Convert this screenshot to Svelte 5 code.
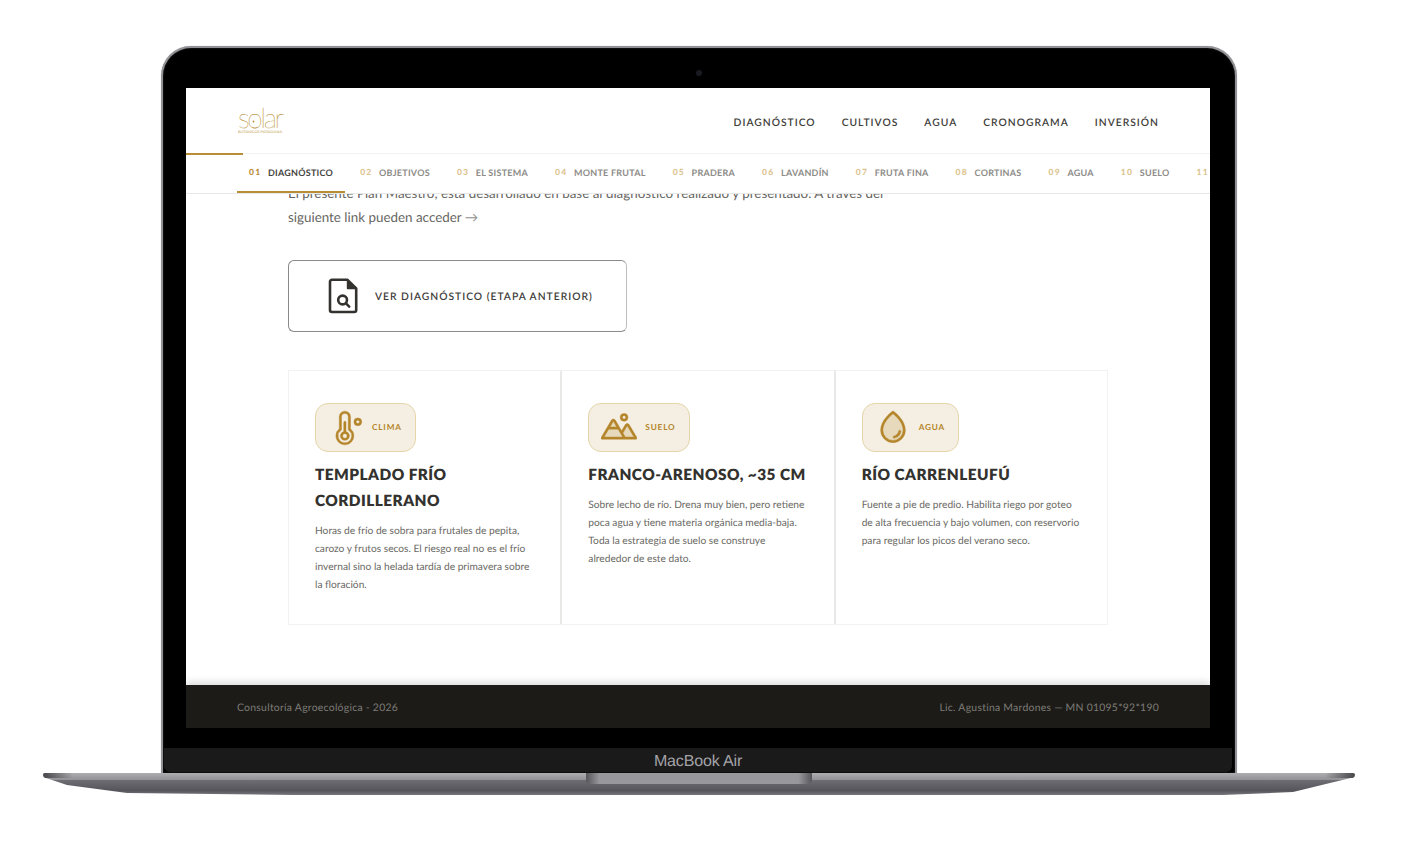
<script>
  const navLinks = ['DIAGNÓSTICO', 'CULTIVOS', 'AGUA', 'CRONOGRAMA', 'INVERSIÓN'];
  const tabs = [
    ['01', 'DIAGNÓSTICO'], ['02', 'OBJETIVOS'], ['03', 'EL SISTEMA'], ['04', 'MONTE FRUTAL'],
    ['05', 'PRADERA'], ['06', 'LAVANDÍN'], ['07', 'FRUTA FINA'], ['08', 'CORTINAS'],
    ['09', 'AGUA'], ['10', 'SUELO'], ['11', '']
  ];
  const cards = [
    { tag: 'CLIMA', icon: 'thermo', title: 'TEMPLADO FRÍO CORDILLERANO', text: 'Horas de frío de sobra para frutales de pepita, carozo y frutos secos. El riesgo real no es el frío invernal sino la helada tardía de primavera sobre la floración.' },
    { tag: 'SUELO', icon: 'mount', title: 'FRANCO-ARENOSO, ~35 CM', text: 'Sobre lecho de río. Drena muy bien, pero retiene poca agua y tiene materia orgánica media-baja. Toda la estrategia de suelo se construye alrededor de este dato.' },
    { tag: 'AGUA', icon: 'drop', title: 'RÍO CARRENLEUFÚ', text: 'Fuente a pie de predio. Habilita riego por goteo de alta frecuencia y bajo volumen, con reservorio para regular los picos del verano seco.' }
  ];
</script>

<div class="stage">
  <div class="lid">
    <div class="bezel-top"><span class="camera"></span></div>
    <div class="screen">
      <header class="head">
        <svg class="logo" viewBox="0 0 50 30" width="50" height="30" aria-label="solar">
          <text x="0" y="22" class="logo-word">solar</text>
          <circle cx="15.5" cy="15.5" r="0.9" fill="#b98d33" />
          <text x="0" y="27.4" class="logo-sub" textLength="44" lengthAdjust="spacingAndGlyphs">BOTÁNICOS PATAGONIA</text>
        </svg>
        <nav class="mainnav">
          {#each navLinks as l}<span>{l}</span>{/each}
        </nav>
      </header>
      <div class="subnav">
        <span class="progress"></span>
        {#each tabs as t, i}
          <div class="tab" class:active={i === 0}><b>{t[0]}</b>{#if t[1]}<span>{t[1]}</span>{/if}</div>
        {/each}
      </div>
      <main class="content">
        <p class="intro">El presente Plan Maestro, está desarrollado en base al diagnóstico realizado y presentado. A través del siguiente link pueden acceder <span class="arrow">→</span></p>
        <div class="linkbtn">
          <svg viewBox="0 0 30 36" width="30" height="36" fill="none" stroke="#33322e" stroke-width="2.6" stroke-linejoin="round" stroke-linecap="round">
            <path d="M4 1.8H19.5L28.2 10.5V32a2 2 0 0 1-2 2H4a2 2 0 0 1-2-2V3.8a2 2 0 0 1 2-2Z" />
            <path d="M19.5 2.5V10.5H27.5Z" fill="#33322e" stroke-width="1.4" />
            <circle cx="14.6" cy="22" r="4.4" />
            <path d="M18 25.4L21.2 28.6" />
          </svg>
          <span>VER DIAGNÓSTICO (ETAPA ANTERIOR)</span>
        </div>
        <section class="cards">
          {#each cards as c}
            <article class="card">
              <div class="badge">
                <svg class="ic" viewBox="0 0 256 256" width="36" height="36" fill="#b4852a" stroke="#b4852a" stroke-width="3">
                  {#if c.icon === 'thermo'}
                    <path d="M212,56a28,28,0,1,0,28,28A28,28,0,0,0,212,56Zm0,40a12,12,0,1,1,12-12A12,12,0,0,1,212,96Zm-84,57V88a8,8,0,0,0-16,0v65a32,32,0,1,0,16,0Zm-8,47a16,16,0,1,1,16-16A16,16,0,0,1,120,200Zm40-66V48a40,40,0,0,0-80,0v86a64,64,0,1,0,80,0Zm-40,98a48,48,0,0,1-27.42-87.4A8,8,0,0,0,96,138V48a24,24,0,0,1,48,0v90a8,8,0,0,0,3.42,6.56A48,48,0,0,1,120,232Z" />
                  {:else if c.icon === 'mount'}
                    <path opacity="0.2" stroke="none" d="M88 64L8 200H248L186 96L147 163Z" />
                    <path d="M164,80a28,28,0,1,0-28-28A28,28,0,0,0,164,80Zm0-40a12,12,0,1,1-12,12A12,12,0,0,1,164,40Zm90.88,155.92-54.56-92.08A15.87,15.87,0,0,0,186.55,96h0a15.85,15.85,0,0,0-13.76,7.84L146.63,148l-44.84-76.1a16,16,0,0,0-27.58,0L1.11,195.94A8,8,0,0,0,8,208H248a8,8,0,0,0,6.88-12.08ZM88,80l23.57,40H64.43ZM22,192l33-56h66l18.74,31.8,0,0L154,192Zm150.57,0-16.66-28.28L186.55,112,234,192Z" />
                  {:else}
                    <path opacity="0.2" stroke="none" d="M208,144a80,80,0,0,1-160,0c0-72,80-128,80-128S208,72,208,144Z" />
                    <path d="M174,47.75a254.19,254.19,0,0,0-41.45-38.3,8,8,0,0,0-9.18,0A254.19,254.19,0,0,0,82,47.75C54.51,79.32,40,112.6,40,144a88,88,0,0,0,176,0C216,112.6,201.49,79.32,174,47.75ZM128,216a72.08,72.08,0,0,1-72-72c0-57.23,55.47-105,72-118,16.53,13,72,60.75,72,118A72.08,72.08,0,0,1,128,216Zm55.89-62.66a57.6,57.6,0,0,1-46.56,46.55A8.75,8.75,0,0,1,136,200a8,8,0,0,1-1.32-15.89c16.57-2.79,30.63-16.85,33.44-33.45a8,8,0,0,1,15.78,2.68Z" />
                  {/if}
                </svg>
                <span>{c.tag}</span>
              </div>
              <h3>{c.title}</h3>
              <p>{c.text}</p>
            </article>
          {/each}
        </section>
      </main>
      <footer class="foot">
        <span>Consultoría Agroecológica - 2026</span>
        <span>Lic. Agustina Mardones — MN 01095*92*190</span>
      </footer>
    </div>
    <div class="bezel-bottom"></div>
    <div class="hinge">MacBook Air</div>
  </div>
  <div class="base">
    <svg class="base-shape" viewBox="0 0 1312 23" width="1312" height="23">
      <defs>
        <linearGradient id="bg" x1="0" y1="0" x2="0" y2="1">
          <stop offset="0" stop-color="#aeaeb2" />
          <stop offset="0.3" stop-color="#929297" />
          <stop offset="0.34" stop-color="#6c6c72" />
          <stop offset="0.8" stop-color="#55555b" />
          <stop offset="1" stop-color="#77777c" />
        </linearGradient>
        <linearGradient id="tip" x1="0" y1="0" x2="1" y2="0">
          <stop offset="0" stop-color="#3c3c40" stop-opacity="0.9" />
          <stop offset="1" stop-color="#3c3c40" stop-opacity="0" />
        </linearGradient>
        <linearGradient id="tipr" x1="1" y1="0" x2="0" y2="0">
          <stop offset="0" stop-color="#3c3c40" stop-opacity="0.9" />
          <stop offset="1" stop-color="#3c3c40" stop-opacity="0" />
        </linearGradient>
        <linearGradient id="nt" x1="0" y1="0" x2="1" y2="0">
          <stop offset="0" stop-color="#55555a" />
          <stop offset="0.06" stop-color="#98989c" />
          <stop offset="0.94" stop-color="#98989c" />
          <stop offset="1" stop-color="#55555a" />
        </linearGradient>
      </defs>
      <path d="M2 0H1310Q1312 0 1312 2.5V4L1287 10L1250 19L1180 22H250L84 20L24 12L0 4V2Q0 0 2 0Z" fill="url(#bg)" />
      <path d="M0 2Q0 0 2 0H30V5H2Z" fill="url(#tip)" />
      <path d="M1312 2Q1312 0 1310 0H1282V5H1310Z" fill="url(#tipr)" />
      <path d="M543 0H769V7Q769 11 763 11H549Q543 11 543 7Z" fill="url(#nt)" />
    </svg>
  </div>
</div>

<style>
  :global(body) { margin: 0; background: #fff; }
  .stage { width: 1411px; height: 856px; box-sizing: border-box; padding: 46px 56px 0 43px; overflow: hidden; display: flex; flex-direction: column; align-items: center; background: #fff; font-family: Lato, "Open Sans", sans-serif; text-rendering: geometricPrecision; }
  .lid { width: 1076px; height: 727px; box-sizing: border-box; flex: none; background: #000; border-radius: 30px 30px 0 0; border: 2px solid #929296; border-bottom: none; padding: 0 25px 0 23px; display: flex; flex-direction: column; box-shadow: inset 0 0 2px #333, 0 0 1px rgba(140,140,145,.7); }
  .bezel-top { height: 40px; flex: none; display: flex; justify-content: center; align-items: flex-start; padding-top: 22px; box-sizing: border-box; }
  .camera { width: 6px; height: 6px; border-radius: 50%; background: #191b20; margin-left: 2px; }
  .screen { width: 1024px; height: 640px; flex: none; background: #fff; display: flex; flex-direction: column; overflow: hidden; position: relative; }

  .head { height: 65px; flex: none; display: flex; align-items: center; justify-content: space-between; padding: 0 51px 0 52px; box-sizing: border-box; background: #fff; }
  .logo-word { font-family: Lato, sans-serif; font-weight: 100; font-size: 28px; letter-spacing: -2.4px; fill: #b98d33; stroke: #b98d33; stroke-width: 0.15; }
  .logo-sub { font-family: Lato, sans-serif; font-weight: 400; font-size: 3.4px; fill: #c09a4a; }
  .mainnav { display: flex; gap: 26px; font-size: 10.3px; font-weight: 600; letter-spacing: 1px; color: #3e3d39; margin-top: 5px; }

  .subnav { height: 41px; flex: none; display: flex; align-items: stretch; gap: 3px; padding-left: 51px; box-sizing: border-box; box-shadow: inset 0 1px 0 #f2f2f2; border-bottom: 1px solid #e8e8e8; background: #fff; position: relative; z-index: 2; white-space: nowrap; overflow: hidden; }
  .progress { position: absolute; left: 0; top: 0; width: 57px; height: 1.5px; background: #b98d33; }
  .tab { flex: none; display: flex; align-items: center; gap: 6.5px; padding: 0 12px 2px; box-sizing: border-box; font-size: 9px; font-weight: 700; color: #8d8c88; letter-spacing: 0.25px; position: relative; height: 40px; }
  .tab b { color: #dcc48f; font-weight: 900; letter-spacing: 1.3px; font-size: 8.5px; }
  .tab.active { color: #45443f; }
  .tab.active b { color: #b98d33; }
  .tab.active::after { content: ""; position: absolute; left: 0; right: 0; bottom: 0; height: 2px; background: #b98d33; }

  .content { flex: 1; min-height: 0; overflow: hidden; padding: 0 102px; box-sizing: border-box; }
  .intro { margin: -13px 0 0; width: 612px; font-size: 13.4px; line-height: 24px; color: #66655f; }
  .arrow { color: #8f8f8b; }
  .linkbtn { margin-top: 31px; width: 339px; height: 72px; box-sizing: border-box; border: 1px solid #8a8a8a; border-right-color: #bdbdbd; border-radius: 6px; display: flex; align-items: center; gap: 17px; padding-left: 39px; font-size: 10.3px; font-weight: 600; letter-spacing: 1px; color: #3e3d39; }
  .linkbtn span { padding-top: 2px; }
  .cards { margin-top: 38px; display: grid; grid-template-columns: repeat(3, 1fr); gap: 2px; width: 820px; height: 255px; box-sizing: border-box; border: 1px solid #f2f2f0; background: #e9e9e7; }
  .card { padding: 32px 26px 0 26px; box-sizing: border-box; background: #fff; min-width: 0; }
  .badge { width: fit-content; height: 49px; box-sizing: border-box; background: #f4efe2; border: 1px solid #e6d5a8; border-radius: 13px; display: flex; align-items: center; gap: 8px; padding: 0 13px 0 12px; font-size: 8.2px; font-weight: 700; letter-spacing: 0.85px; color: #b4852a; }
  .badge span { margin-bottom: 1px; }
  .card h3 { margin: 10px 0 0; font-size: 15.4px; line-height: 26px; font-weight: 800; letter-spacing: 0.45px; color: #33322e; }
  .card p { margin: 8px 0 0; font-size: 10.2px; line-height: 18px; color: #6a6964; }

  .foot { height: 43px; flex: none; display: flex; align-items: center; justify-content: space-between; padding: 2px 51px 0; box-sizing: border-box; background: #1c1b17; color: #7d7c78; font-size: 10.4px; font-weight: 400; letter-spacing: 0.27px; box-shadow: 0 -3px 7px rgba(0,0,0,.14); position: relative; }

  .bezel-bottom { height: 20px; flex: none; }
  .hinge { flex: 1; margin: 0 -22px 1px -22px; padding-top: 4px; box-sizing: border-box; background: #1a1a1a; border-radius: 0 0 6px 6px; display: flex; align-items: center; justify-content: center; font-family: "Liberation Sans", sans-serif; font-size: 16px; letter-spacing: -0.15px; color: #a3a3a8; }

  .base { width: 1312px; height: 23px; flex: none; }
  .base-shape { display: block; }
</style>
